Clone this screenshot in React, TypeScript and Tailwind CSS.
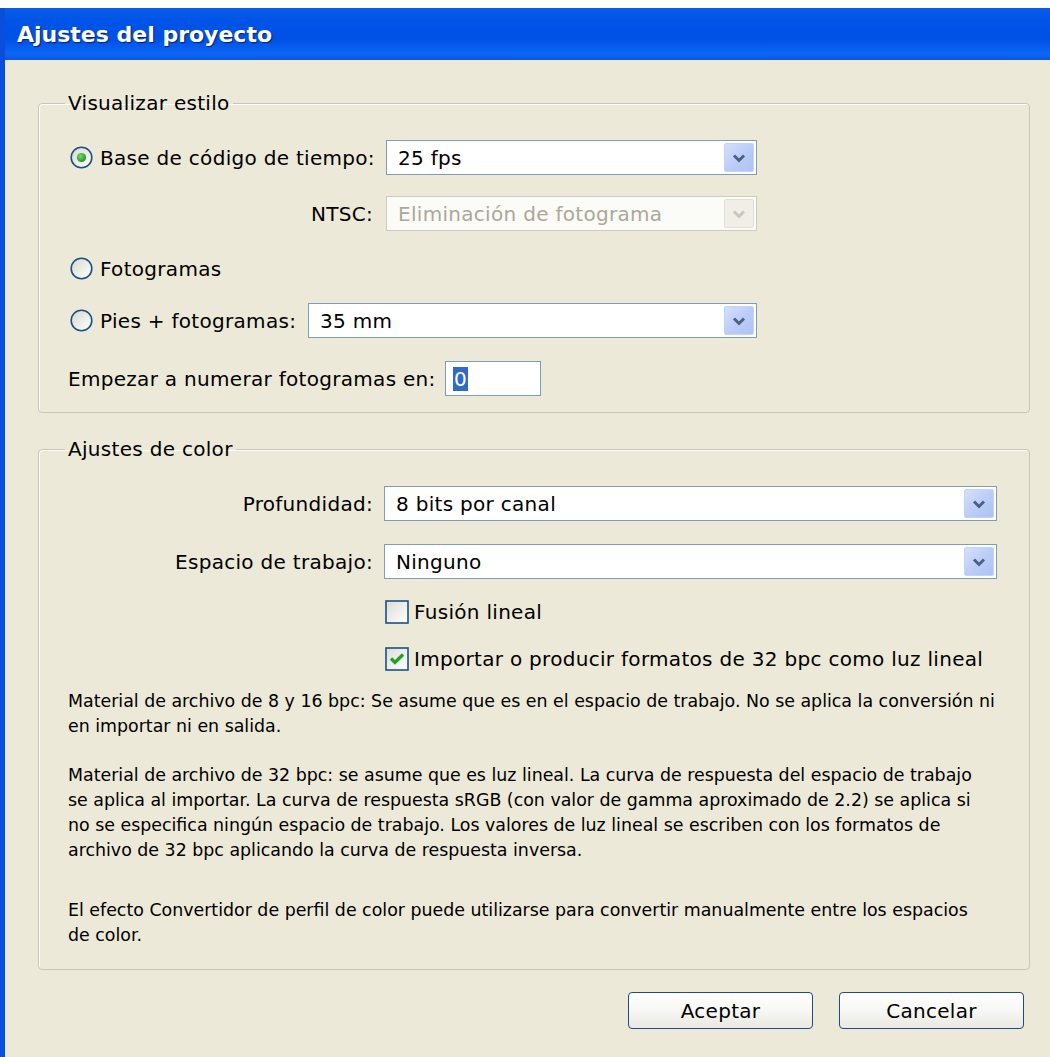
import React from 'react';

const ui = "font-['DejaVu_Sans',Verdana,sans-serif]";

const Chevron: React.FC<{ color: string }> = ({ color }) => (
    <svg width="14" height="10" viewBox="0 0 14 10">
        <path d="M2 2.5 L7 7.5 L12 2.5" fill="none" stroke={color} strokeWidth="3" strokeLinejoin="miter" />
    </svg>
);

const Select: React.FC<{ value: string; width: string; disabled?: boolean }> = ({ value, width, disabled }) => (
    <div
        className={`${width} h-[35px] flex items-center border ${
            disabled ? 'border-[#cdcbbf] bg-[#fbfbf8]' : 'border-[#7f9db9] bg-white'
        }`}
    >
        <span className={`flex-1 pl-[11px] text-[20px] whitespace-nowrap ${disabled ? 'text-[#aca899]' : 'text-black'}`}>
            {value}
        </span>
        <div
            className={`w-[30px] h-[29px] mr-[2px] rounded-[2px] flex items-center justify-center ${
                disabled
                    ? 'bg-[#efeee7] border border-[#e2e0d6]'
                    : 'bg-[linear-gradient(135deg,#d4e0fb_0%,#bccdf7_50%,#aec3f3_100%)] border border-[#c4d4f8]'
            }`}
        >
            <Chevron color={disabled ? '#c9c7ba' : '#4d6185'} />
        </div>
    </div>
);

const Radio: React.FC<{ checked?: boolean }> = ({ checked }) => {
    const id = React.useId();
    return (
        <svg width="23" height="23" viewBox="0 0 23 23" className="shrink-0">
            <defs>
                <linearGradient id={`${id}b`} x1="0" y1="0" x2="1" y2="1">
                    <stop offset="0" stopColor="#d8d8d0" />
                    <stop offset="1" stopColor="#ffffff" />
                </linearGradient>
                <radialGradient id={`${id}d`} cx="0.4" cy="0.35" r="0.7">
                    <stop offset="0" stopColor="#6fdc6f" />
                    <stop offset="1" stopColor="#1a8f1a" />
                </radialGradient>
            </defs>
            <circle cx="11.5" cy="11.5" r="10.3" fill={`url(#${id}b)`} stroke="#1c5180" strokeWidth="1.6" />
            {checked && <circle cx="11.5" cy="11.5" r="4.6" fill={`url(#${id}d)`} />}
        </svg>
    );
};

const Checkbox: React.FC<{ checked?: boolean }> = ({ checked }) => {
    const id = React.useId();
    return (
        <svg width="24" height="24" viewBox="0 0 24 24" className="shrink-0">
            <defs>
                <linearGradient id={id} x1="0" y1="0" x2="1" y2="1">
                    <stop offset="0" stopColor="#dcdcd6" />
                    <stop offset="1" stopColor="#ffffff" />
                </linearGradient>
            </defs>
            <rect x="1" y="1" width="22" height="22" fill={`url(#${id})`} stroke="#1c5180" strokeWidth="1.6" />
            {checked && (
                <path d="M6 11.5 L10 15.5 L18 7.5" fill="none" stroke="#21a121" strokeWidth="3.2" />
            )}
        </svg>
    );
};

const Group: React.FC<{ title: string; className?: string; children: React.ReactNode }> = ({ title, className, children }) => (
    <fieldset className={`border border-[#c9c6b6] rounded-[4px] shadow-[inset_1px_1px_0_#ffffff] ${className ?? ''}`}>
        <legend className="ml-[26px] px-[3px] text-[20px] leading-[22px] text-black">{title}</legend>
        {children}
    </fieldset>
);

const Button: React.FC<{ label: string }> = ({ label }) => (
    <button className="w-[185px] h-[37px] rounded-[4px] border-[1.5px] border-[#1f4c84] bg-[linear-gradient(180deg,#ffffff_0%,#f7f7f4_50%,#e9e8e1_100%)] text-[20px] text-black">
        {label}
    </button>
);

export default function App() {
    return (
        <div className={`w-[1050px] h-[1057px] bg-white pt-[8px] overflow-hidden ${ui}`}>
            <div className="h-full flex flex-col border-l-[5px] border-[#0a4fdc]">
                <div className="h-[52px] shrink-0 flex items-center pl-[12px] bg-[linear-gradient(180deg,#0a5ce8_0%,#0054e6_25%,#0051e6_60%,#0d66f3_88%,#0a58e8_100%)]">
                    <span className="text-[22px] font-bold text-white [text-shadow:1px_1px_1px_#0a1f6b]">
                        Ajustes del proyecto
                    </span>
                </div>

                <div className="flex-1 bg-[#ece9d8] pl-[33px] pr-[20px] pt-[32px] text-[20px] tracking-[0.3px] text-black">
                    <Group title="Visualizar estilo">
                        <div className="pt-[26px] pb-[16px]">
                            <div className="h-[35px] flex items-center">
                                <div className="w-[334px] pl-[31px] flex items-center gap-[7px]">
                                    <Radio checked />
                                    <span className="whitespace-nowrap">Base de código de tiempo:</span>
                                </div>
                                <div className="ml-[13px]">
                                    <Select value="25 fps" width="w-[371px]" />
                                </div>
                            </div>
                            <div className="h-[35px] mt-[21px] flex items-center">
                                <div className="w-[334px] text-right">NTSC:</div>
                                <div className="ml-[13px]">
                                    <Select value="Eliminación de fotograma" width="w-[371px]" disabled />
                                </div>
                            </div>
                            <div className="h-[35px] mt-[20px] flex items-center pl-[31px] gap-[7px]">
                                <Radio />
                                <span>Fotogramas</span>
                            </div>
                            <div className="h-[35px] mt-[17px] flex items-center">
                                <div className="w-[257px] pl-[31px] flex items-center gap-[7px]">
                                    <Radio />
                                    <span className="whitespace-nowrap">Pies + fotogramas:</span>
                                </div>
                                <div className="ml-[12px]">
                                    <Select value="35 mm" width="w-[449px]" />
                                </div>
                            </div>
                            <div className="h-[35px] mt-[23px] flex items-center pl-[29px]">
                                <span className="w-[377px] whitespace-nowrap">Empezar a numerar fotogramas en:</span>
                                <div className="w-[96px] h-[35px] border border-[#7f9db9] bg-white flex items-center pl-[7px]">
                                    <span className="bg-[#316ac5] text-white leading-[24px] px-[1px]">0</span>
                                </div>
                            </div>
                        </div>
                    </Group>

                    <Group title="Ajustes de color" className="mt-[25px]">
                        <div className="pt-[26px] pb-[21px]">
                            <div className="h-[35px] flex items-center">
                                <div className="w-[334px] text-right">Profundidad:</div>
                                <div className="ml-[11px]">
                                    <Select value="8 bits por canal" width="w-[613px]" />
                                </div>
                            </div>
                            <div className="h-[35px] mt-[23px] flex items-center">
                                <div className="w-[334px] text-right whitespace-nowrap">Espacio de trabajo:</div>
                                <div className="ml-[11px]">
                                    <Select value="Ninguno" width="w-[613px]" />
                                </div>
                            </div>
                            <div className="h-[24px] mt-[21px] flex items-center pl-[346px] gap-[5px]">
                                <Checkbox />
                                <span>Fusión lineal</span>
                            </div>
                            <div className="h-[24px] mt-[23px] flex items-center pl-[346px] gap-[5px]">
                                <Checkbox checked />
                                <span className="whitespace-nowrap">Importar o producir formatos de 32 bpc como luz lineal</span>
                            </div>

                            <div className="pl-[29px] text-[17.4px] tracking-normal leading-[25px] whitespace-nowrap">
                                <p className="mt-[18px]">
                                    Material de archivo de 8 y 16 bpc: Se asume que es en el espacio de trabajo. No se aplica la conversión ni
                                    <br />
                                    en importar ni en salida.
                                </p>
                                <p className="mt-[24px]">
                                    Material de archivo de 32 bpc: se asume que es luz lineal. La curva de respuesta del espacio de trabajo
                                    <br />
                                    se aplica al importar. La curva de respuesta sRGB (con valor de gamma aproximado de 2.2) se aplica si
                                    <br />
                                    no se especifica ningún espacio de trabajo. Los valores de luz lineal se escriben con los formatos de
                                    <br />
                                    archivo de 32 bpc aplicando la curva de respuesta inversa.
                                </p>
                                <p className="mt-[35px]">
                                    El efecto Convertidor de perfil de color puede utilizarse para convertir manualmente entre los espacios
                                    <br />
                                    de color.
                                </p>
                            </div>
                        </div>
                    </Group>

                    <div className="mt-[22px] pr-[6px] flex justify-end gap-[26px]">
                        <Button label="Aceptar" />
                        <Button label="Cancelar" />
                    </div>
                </div>
            </div>
        </div>
    );
}
